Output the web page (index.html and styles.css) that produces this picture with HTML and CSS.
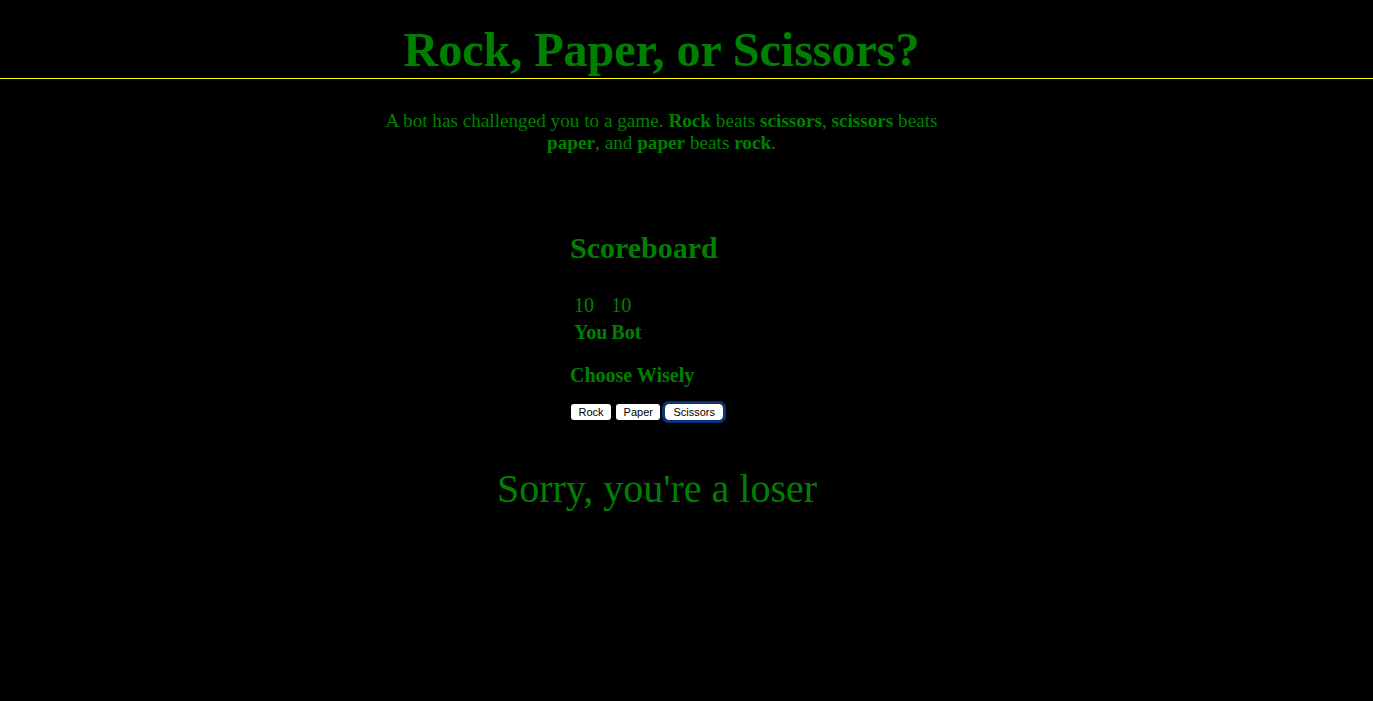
FILE: index.html
```html
<!DOCTYPE html>
<html>
<head>
<meta charset="utf-8">
<link rel="stylesheet" href="styles.css">
</head>
<body>
<header class="header">
  <h1 class="title">Rock, Paper, or Scissors?</h1>
</header>
<main class="wrap">
  <p class="intro">A bot has challenged you to a game. <b>Rock</b> beats <b>scissors</b>, <b>scissors</b> beats <b>paper</b>, and <b>paper</b> beats <b>rock</b>.</p>
  <section class="game">
    <h2 class="board-title">Scoreboard</h2>
    <table class="scores">
      <tr><td>10</td><td>10</td></tr>
      <tr><th>You</th><th>Bot</th></tr>
    </table>
    <h3 class="choose">Choose Wisely</h3>
    <div class="buttons">
      <button class="btn">Rock</button>
      <button class="btn">Paper</button>
      <button class="btn focused">Scissors</button>
    </div>
  </section>
  <p class="result">Sorry, you're a loser</p>
</main>
</body>
</html>
```
FILE: styles.css
```css
html, body {
  margin: 0;
  background: #000;
  color: #008000;
  font-family: "Liberation Serif", "Times New Roman", serif;
}
.header {
  border-bottom: 1px solid #ffff00;
  width: 1373px;
}
.title {
  width: 1323px;
  margin: 0;
  padding-top: 22px;
  padding-bottom: 1px;
  text-align: center;
  font-size: 48px;
  line-height: 55px;
  font-weight: bold;
}
.wrap {
  width: 1323px;
}
.intro {
  width: 562px;
  margin: 31px auto 0;
  text-align: center;
  font-size: 19.2px;
  line-height: 22px;
}
.game {
  width: 183px;
  margin: 77px auto 0;
}
.board-title {
  margin: 0;
  font-size: 30px;
  line-height: 34px;
}
.scores {
  margin-top: 26px;
  margin-left: 1px;
  border-spacing: 2px;
  font-size: 20px;
  line-height: 23px;
}
.scores td, .scores th {
  padding: 1px;
  text-align: left;
}
.scores th { font-weight: bold; }
.choose {
  margin: 16px 0 0;
  font-size: 20px;
  line-height: 24px;
  font-weight: bold;
}
.buttons {
  display: flex;
  gap: 5px;
  margin-top: 17px;
  padding-left: 1px;
}
.btn {
  font-family: "Liberation Sans", Arial, sans-serif;
  font-size: 11px;
  background: #fff;
  color: #000;
  border: none;
  border-radius: 3px;
  padding: 1px 7.5px;
  height: 16px;
  line-height: 14px;
}
.btn.focused {
  padding: 1px 8px;
  outline: 3px solid #0b3377;
  outline-offset: 0;
  border-radius: 4px;
}
.result {
  margin: 46px 0 0;
  padding-right: 9px;
  text-align: center;
  font-size: 40px;
  line-height: 46px;
}
```
